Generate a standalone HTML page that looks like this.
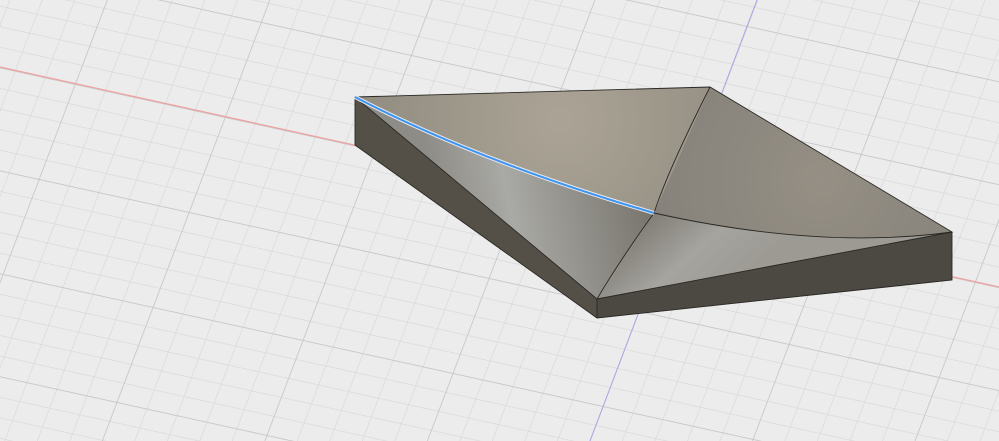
<!DOCTYPE html>
<html><head><style>html,body{margin:0;padding:0;background:#ececec;overflow:hidden}svg{display:block}</style></head>
<body>
<svg width="999" height="441" viewBox="0 0 999 441" xmlns="http://www.w3.org/2000/svg">
<defs>
<pattern id="g" width="30" height="19" patternUnits="userSpaceOnUse" patternTransform="matrix(1,0.22,-0.38,1,675,216)">
<path d="M0 0H30M0 0V19" stroke="#d6d6d6" stroke-width="1.2" fill="none"/>
</pattern>
<pattern id="G" width="150" height="95" patternUnits="userSpaceOnUse" patternTransform="matrix(1,0.22,-0.38,1,675,216)">
<path d="M0 0H150M0 0V95" stroke="#c4c4c4" stroke-width="1.4" fill="none"/>
</pattern>
<radialGradient id="t1" cx="560" cy="120" r="220" gradientUnits="userSpaceOnUse"><stop offset="0" stop-color="#aba496"/><stop offset="1" stop-color="#8f8a7f"/></radialGradient>
<radialGradient id="t2" cx="820" cy="180" r="180" gradientUnits="userSpaceOnUse"><stop offset="0" stop-color="#958f84"/><stop offset="1" stop-color="#85817a"/></radialGradient>
<linearGradient id="t3" x1="650" y1="220" x2="720" y2="300" gradientUnits="userSpaceOnUse"><stop offset="0" stop-color="#838079"/><stop offset="0.5" stop-color="#a6a49f"/><stop offset="1" stop-color="#9c9a93"/></linearGradient>
<linearGradient id="t4" x1="440" y1="220" x2="640" y2="180" gradientUnits="userSpaceOnUse"><stop offset="0" stop-color="#8e8c86"/><stop offset="0.35" stop-color="#a9a9a5"/><stop offset="1" stop-color="#7a776f"/></linearGradient>
</defs>
<rect width="999" height="441" fill="#ececec"/>
<rect width="999" height="441" fill="url(#g)"/>
<rect width="999" height="441" fill="url(#G)"/>
<line x1="0" y1="67" x2="999" y2="287" stroke="#f0a0a0" stroke-width="1.2"/>
<line x1="757" y1="0" x2="590" y2="441" stroke="#a8a8e8" stroke-width="1"/>
<polygon points="355,97 597,299 597,318 355,145" fill="#545048"/>
<polygon points="597,299 952,232 952,280 597,318" fill="#4c4943"/>
<path d="M355,97 L710,87 L654,213 Q480,162 355,97Z" fill="url(#t1)"/>
<path d="M710,87 L952,232 Q820,250 654,213Z" fill="url(#t2)"/>
<path d="M654,213 Q820,250 952,232 L597,299 Z" fill="url(#t3)"/>
<path d="M355,97 Q480,162 654,213 L597,299 Z" fill="url(#t4)"/>
<g fill="none" stroke="#2a2824" stroke-width="0.9">
<path d="M355,97 L710,87 L952,232 L597,299 L355,97"/>
<path d="M710,87 Q668,170 654,213 Q620,260 597,299"/>
<path d="M654,213 Q820,250 952,232"/>
<path d="M355,97 V145 L597,318 L952,280 V232 M597,299 V318"/>
</g>
<path d="M355,97 Q480,162 654,213" fill="none" stroke="#e8e8f0" stroke-width="4"/>
<path d="M355,97 Q480,162 654,213" fill="none" stroke="#3b95f0" stroke-width="2"/>
</svg>
</body></html>
